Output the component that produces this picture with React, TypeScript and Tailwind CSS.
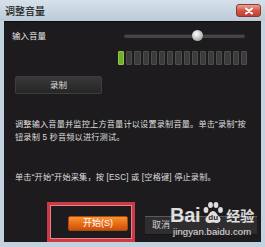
const SEGMENTS = 16;

function Meter() {
  return (
    <div className="ml-[114px] mt-[9px] flex h-[14px] gap-[2px]">
      {Array.from({ length: SEGMENTS }).map((_, i) => (
        <div
          key={i}
          className={`w-[6.2px] h-full rounded-[1px] ${
            i === 0
              ? 'bg-[#72ad2c] border border-[#8fc94a]'
              : 'bg-[#3b3b3b] border border-[#4d4d4d]'
          }`}
        />
      ))}
    </div>
  );
}

function Watermark() {
  return (
    <div className="absolute left-[166px] top-[179px] flex flex-col items-center text-white/85 pointer-events-none">
      <div className="flex items-end">
        <span className="text-[20px] font-bold leading-[19px] tracking-[-0.3px]">Bai</span>
        <span className="relative w-[24px] h-[24px] mx-[1px]">
          <svg viewBox="0 0 24 24" className="absolute inset-0 w-full h-full" fill="currentColor">
            <ellipse cx="5" cy="9" rx="2.4" ry="3" />
            <ellipse cx="9.5" cy="4" rx="2.4" ry="3" />
            <ellipse cx="15" cy="4" rx="2.4" ry="3" />
            <ellipse cx="19.5" cy="9" rx="2.4" ry="3" />
            <path d="M12 10c-3 0-4 4-6.5 6-2 1.8-1 6 2.5 6 1.5 0 2.5-.6 4-.6s2.5.6 4 .6c3.5 0 4.5-4.2 2.5-6C16 14 15 10 12 10z" />
          </svg>
          <span className="absolute left-0 right-0 top-[12px] text-center text-[8px] font-bold leading-[9px] text-[#2a2628]">
            du
          </span>
        </span>
        <span className="text-[14px] leading-[17px] font-bold">经验</span>
      </div>
      <div className="text-[9.5px] leading-[12px] mt-[1px] tracking-[0.1px]">jingyan.baidu.com</div>
    </div>
  );
}

export default function App() {
  return (
    <div className="w-[265px] h-[247px] flex flex-col bg-[#c3d2df] font-['Liberation_Sans','Noto_Sans_CJK_SC',sans-serif] overflow-hidden">
      {/* Title bar */}
      <div className="h-[21px] flex items-start justify-between bg-gradient-to-b from-[#d6e1ea] to-[#bccbd8]">
        <span className="ml-[5px] mt-[6px] text-[10px] leading-[12px] font-medium text-[#1b1b1b]">调整音量</span>
        <div className="mt-[4px] mr-[4px] w-[25px] h-[13px] rounded-[3px] border border-[#8a3a34] bg-gradient-to-b from-[#e8a395] via-[#d2574a] to-[#c2402f] flex items-center justify-center">
          <svg viewBox="0 0 10 8" className="w-[10px] h-[8px]" stroke="white" strokeWidth="2" strokeLinecap="round">
            <path d="M2 1.5 L8 6.5 M8 1.5 L2 6.5" />
          </svg>
        </div>
      </div>

      {/* Body */}
      <div className="relative mx-[4px] mb-[5px] flex-1 bg-[#1d1b1d] border-t border-[#0e0d0e] text-[#e4e4e4] flex flex-col">
        <div className="flex items-center mt-[8px] h-[12px]">
          <span className="ml-[8px] w-[104px] text-[8.5px] leading-[12px]">输入音量</span>
          <div className="relative ml-[8px] w-[121px] h-[4px] rounded-full bg-[#454545] border-t border-[#2c2c2c]">
            <div className="absolute left-[68px] top-[-5px] w-[11px] h-[11px] rounded-full bg-[radial-gradient(circle_at_40%_35%,#ffffff,#c4c4c4_50%,#7d7d7d)]" />
          </div>
        </div>

        <Meter />

        <div className="ml-[11px] mt-[11px] w-[87px] h-[18px] rounded-[2px] border border-[#3e3e3e] bg-gradient-to-b from-[#393939] to-[#262626] flex items-center justify-center text-[8.5px] text-[#dcdcdc]">
          录制
        </div>

        <p className="ml-[11px] mr-[10px] mt-[24px] text-[8.2px] leading-[13px] tracking-[0.15px] text-[#dedede]">
          调整输入音量并监控上方音量计以设置录制音量。单击“录制”按钮录制 5 秒音频以进行测试。
        </p>

        <p className="ml-[11px] mt-[27px] text-[8.2px] leading-[13px] tracking-[0.15px] text-[#dedede]">
          单击“开始”开始采集，按 [ESC] 或 [空格键] 停止录制。
        </p>

        <div className="flex items-start mt-[32px]">
          <div className="ml-[64px] w-[60px] h-[15px] rounded-[2px] border border-[#a84a10] bg-gradient-to-b from-[#f59436] via-[#ea6d14] to-[#c9500a] flex items-center justify-center text-[9px] text-white">
            开始(S)
          </div>
          <div className="ml-[17px] w-[112px] h-[19px] border-t border-[#5a5a5a] border-b border-b-[#151515] bg-[#2f2d2f] flex items-center text-[9px] text-[#cfcfcf]">
            <span className="ml-[7px]">取消</span>
          </div>
        </div>

        {/* annotation */}
        <div className="absolute left-[43px] top-[180px] w-[88px] h-[40px] border-[3px] border-[#cc3a44] shadow-[inset_0_0_0_1px_#e58088]" />

        <Watermark />
      </div>
    </div>
  );
}
